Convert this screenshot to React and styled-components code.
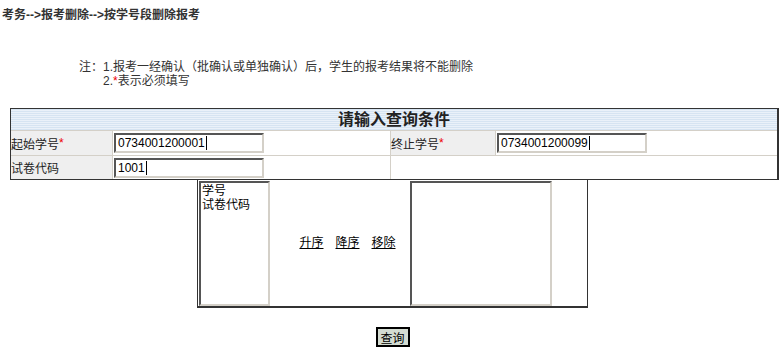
import React from "react";
import styled, { createGlobalStyle } from "styled-components";

const GlobalStyle = createGlobalStyle`
  body {
    margin: 0;
    background: #fff;
    font-family: "Liberation Sans", "Noto Sans CJK SC", sans-serif;
    font-size: 12px;
    color: #000;
  }
`;

const Page = styled.div`
  width: 780px;
  height: 349px;
  overflow: hidden;
`;

const Crumb = styled.div`
  padding: 7px 0 0 2px;
  height: 16px;
  font-weight: bold;
  color: #333;
  line-height: 16px;
`;

const Notes = styled.div`
  margin: 37px 0 0 79px;
  line-height: 14px;
  color: #333;
`;

const NoteLine = styled.div`
  padding-left: ${p => p.$indent || 0}px;
`;

const Star = styled.span`
  color: #e00;
`;

const Query = styled.div`
  margin: 20px 0 0 10px;
  width: 766px;
  display: grid;
  grid-template-columns: 102px 278px 105px 1fr;
  border-top: 1px solid #333;
  border-left: 1px solid #333;
  border-right: 2px solid #333;
  border-bottom: 1px solid #333;
`;

const Title = styled.div`
  grid-column: 1 / -1;
  height: 21px;
  line-height: 21px;
  text-align: center;
  font-size: 16px;
  font-weight: bold;
  color: #222;
  background: repeating-linear-gradient(#d6e4f2 0 1px, #eaf1f9 1px 2px);
  border-bottom: 1px solid #d4d0c8;
`;

const Cell = styled.div`
  height: ${p => (p.$last ? 23 : 24)}px;
  display: flex;
  align-items: center;
  background: ${p => (p.$label ? "#efefef" : "#fff")};
  border-bottom: ${p => (p.$last ? "none" : "1px solid #d4d0c8")};
  border-right: ${p => (p.$end ? "none" : "1px solid #d4d0c8")};
  grid-column: ${p => p.$span || "auto"};
  padding-left: ${p => (p.$label ? 0 : 1)}px;
  color: #222;
`;

const Field = styled.div`
  box-sizing: border-box;
  width: 150px;
  height: 20px;
  padding: 0 0 0 2px;
  display: flex;
  align-items: center;
  background: #fff;
  border: 2px solid;
  border-color: #555 #d4d0c8 #d4d0c8 #555;
  font-size: 12px;
  color: #000;
`;

const Caret = styled.span`
  display: inline-block;
  width: 1px;
  height: 14px;
  margin-left: 1px;
  background: #000;
`;

const SortRow = styled.div`
  margin-left: 10px;
  width: 768px;
  display: flex;
  justify-content: center;
`;

const SortBox = styled.div`
  margin-left: -3px;
  width: 389px;
  height: 126px;
  display: grid;
  grid-template-columns: 72px 139px 143px 1fr;
  border: 1px solid #333;
  border-top: none;
  border-bottom: 2px solid #333;
`;

const ListBox = styled.div`
  box-sizing: border-box;
  margin: 1px 0 0 1px;
  height: 125px;
  padding: 1px 0 0 1px;
  border: 2px solid;
  border-color: #555 #d4d0c8 #d4d0c8 #555;
  background: #fff;
  line-height: 14px;
`;

const Actions = styled.div`
  display: flex;
  align-items: center;
  justify-content: center;
  gap: 12px;
  padding: 0 0 4px 16px;
`;

const ActionLink = styled.a`
  color: #000;
  text-decoration: underline;
  cursor: pointer;
`;

const ButtonRow = styled.div`
  margin: 19px 0 0 10px;
  width: 768px;
  display: flex;
  justify-content: center;
`;

const QueryButton = styled.button`
  box-sizing: border-box;
  margin-left: -3px;
  width: 34px;
  height: 20px;
  padding: 0;
  font-family: inherit;
  font-size: 12px;
  background: #d4dcd2;
  border: 2px solid #000;
  color: #000;
`;

const Input = ({ value }) => (
  <Field>
    {value}
    <Caret />
  </Field>
);

export default function App() {
  return (
    <Page>
      <GlobalStyle />
      <Crumb>考务--&gt;报考删除--&gt;按学号段删除报考</Crumb>
      <Notes>
        <NoteLine>注：1.报考一经确认（批确认或单独确认）后，学生的报考结果将不能删除</NoteLine>
        <NoteLine $indent={24}>
          2.<Star>*</Star>表示必须填写
        </NoteLine>
      </Notes>
      <Query>
        <Title>请输入查询条件</Title>
        <Cell $label>
          起始学号<Star>*</Star>
        </Cell>
        <Cell>
          <Input value="0734001200001" />
        </Cell>
        <Cell $label>
          终止学号<Star>*</Star>
        </Cell>
        <Cell $end>
          <Input value="0734001200099" />
        </Cell>
        <Cell $label $last>
          试卷代码
        </Cell>
        <Cell $last>
          <Input value="1001" />
        </Cell>
        <Cell $last $end $span="3 / 5" />
      </Query>
      <SortRow>
        <SortBox>
          <ListBox>
            <div>学号</div>
            <div>试卷代码</div>
          </ListBox>
          <Actions>
            <ActionLink>升序</ActionLink>
            <ActionLink>降序</ActionLink>
            <ActionLink>移除</ActionLink>
          </Actions>
          <ListBox />
          <div />
        </SortBox>
      </SortRow>
      <ButtonRow>
        <QueryButton>查询</QueryButton>
      </ButtonRow>
    </Page>
  );
}
